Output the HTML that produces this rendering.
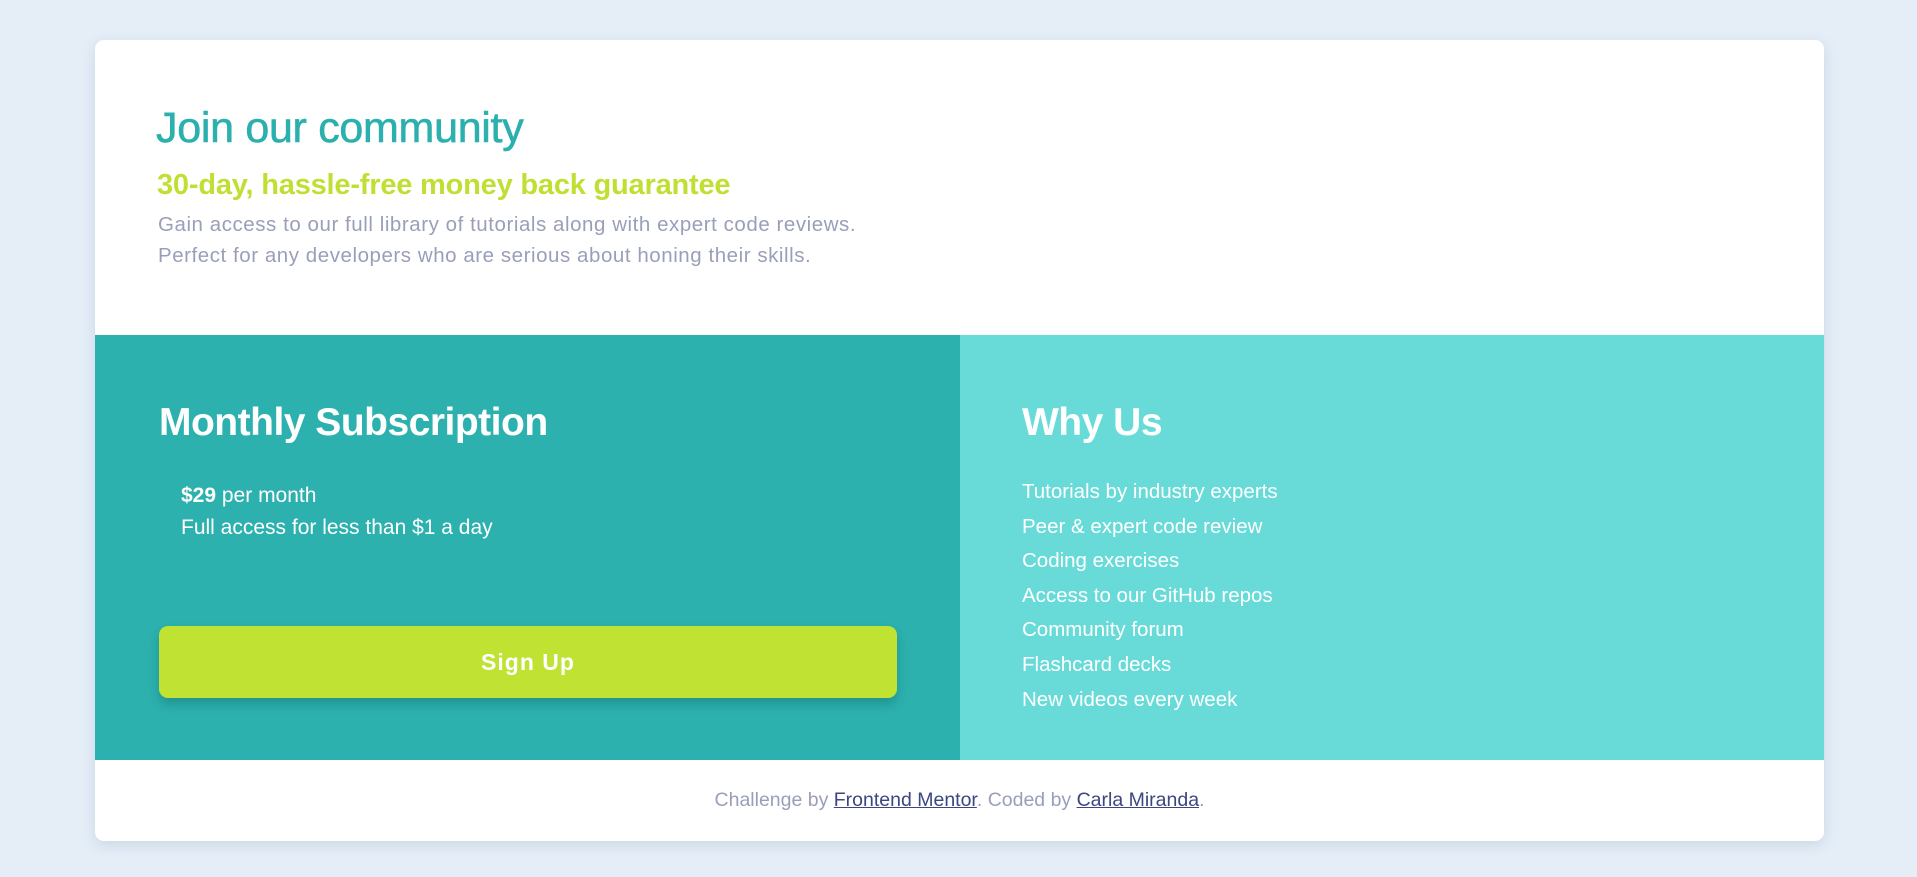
<!DOCTYPE html>
<html><head><meta charset="utf-8"><style>
*{margin:0;padding:0;box-sizing:border-box}
body{width:1917px;height:877px;background:#e5eef7;font-family:"Liberation Sans",sans-serif;position:relative;overflow:hidden}
.card{position:absolute;left:95px;top:40px;width:1729px;height:801px;background:#fff;border-radius:9px;box-shadow:0 4px 14px rgba(80,110,150,.18);overflow:hidden}
h1{position:absolute;left:61px;top:64px;font-size:43px;font-weight:normal;color:#2bb0ae;letter-spacing:-.3px;-webkit-text-stroke:.6px #2bb0ae}
h2{position:absolute;left:62px;top:129px;font-size:29px;font-weight:bold;color:#bfe033;letter-spacing:-.2px}
.p{position:absolute;left:63px;font-size:20.5px;color:#9a9fb9;letter-spacing:.55px}
.left{position:absolute;left:0;top:295px;width:865px;height:425px;background:#2cb1ae}
.right{position:absolute;left:865px;top:295px;width:864px;height:425px;background:#68dbd9}
h3{position:absolute;font-size:39px;font-weight:bold;color:#fff;letter-spacing:-.5px}
.w{position:absolute;color:#fff;font-size:21px}
.btn{position:absolute;left:64px;top:291px;width:738px;height:72px;background:#bfe233;border-radius:9px;box-shadow:0 6px 10px rgba(0,60,60,.25);color:#fff;font-weight:bold;font-size:23px;text-align:center;line-height:72px;letter-spacing:1px}
.foot{position:absolute;left:0;top:749px;width:100%;text-align:center;font-size:19.5px;color:#9a9fb9}
.foot a{color:#3c4680;text-decoration:underline}
</style></head><body>
<div class="card">
<h1>Join our community</h1>
<h2>30-day, hassle-free money back guarantee</h2>
<div class="p" style="top:173px">Gain access to our full library of tutorials along with expert code reviews.</div>
<div class="p" style="top:204px">Perfect for any developers who are serious about honing their skills.</div>
<div class="left">
<h3 style="left:64px;top:66px">Monthly Subscription</h3>
<div class="w" style="left:86px;top:149px"><b>$29</b> per month</div>
<div class="w" style="left:86px;top:181px">Full access for less than $1 a day</div>
<div class="btn">Sign Up</div>
</div>
<div class="right">
<h3 style="left:62px;top:66px">Why Us</h3>
<div class="w" style="left:62px;top:140px;line-height:34.6px;font-size:20.5px">Tutorials by industry experts<br>Peer &amp; expert code review<br>Coding exercises<br>Access to our GitHub repos<br>Community forum<br>Flashcard decks<br>New videos every week</div>
</div>
<div class="foot">Challenge by <a>Frontend Mentor</a>. Coded by <a>Carla Miranda</a>.</div>
</div>
</body></html>
